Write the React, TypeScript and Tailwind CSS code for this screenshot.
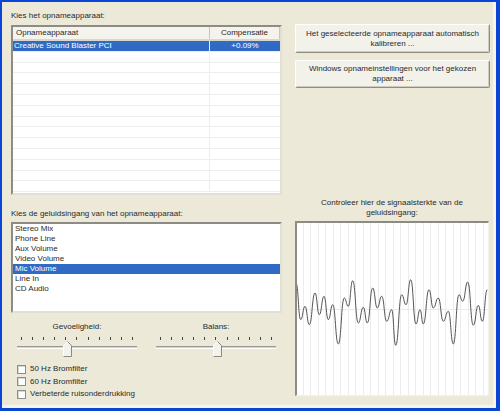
import React from 'react'

const font = { fontFamily: '"Liberation Sans", Arial, sans-serif' }

// peaks and troughs of the signal, traced from the graph (x, y inside the box)
const wave: [number, number][] = [
  [1, 62], [5.7, 98.7], [10, 85.3], [14.3, 103.7], [20, 72], [24.3, 93.7], [29, 75.3],
  [33.3, 98.7], [37.7, 83.7], [43.3, 123], [49.3, 77], [53.3, 85.3], [57.7, 59.7],
  [63.3, 102], [68.3, 86.3], [72.3, 102], [77.7, 67], [82.3, 87], [86.7, 75.3],
  [91.7, 100.3], [96.7, 88.7], [100.7, 124.3], [106.7, 73.7], [111, 83.7], [115.7, 58.7],
  [121, 103], [125, 88.7], [128.3, 103], [134, 68.7], [138.3, 87], [143.3, 77],
  [148.3, 100.3], [153.3, 90.3], [158.3, 123], [164, 73.7], [167.7, 80.3], [172.7, 61],
  [178.3, 104.3], [183.3, 84.3], [187.3, 100.3], [192.3, 68.7],
]

const wavePath = () => {
  let d = `M${wave[0][0]} ${wave[0][1]}`
  for (let i = 1; i < wave.length; i++) {
    const [x0, y0] = wave[i - 1]
    const [x1, y1] = wave[i]
    const h = (x1 - x0) / 2
    d += ` C${x0 + h} ${y0} ${x1 - h} ${y1} ${x1} ${y1}`
  }
  return d
}

const devices = [{ name: 'Creative Sound Blaster PCI', comp: '+0.09%' }]
const inputs = ['Stereo Mix', 'Phone Line', 'Aux Volume', 'Video Volume', 'Mic Volume', 'Line In', 'CD Audio']
const filters = ['50 Hz Bromfilter', '60 Hz Bromfilter', 'Verbeterde ruisonderdrukking']

const XpButton = ({ lines }: { lines: string[] }) => (
  <button className="w-[195px] flex flex-col items-center justify-center rounded-[2px] bg-[#f2f1ea] border border-t-white border-l-white border-r-[#8e8c83] border-b-[#8e8c83] shadow-[inset_-1px_-1px_0_#cfccbf] text-[8px] leading-[10px] text-[#2a2a2a]">
    {lines.map((l) => (
      <span key={l}>{l}</span>
    ))}
  </button>
)

const Slider = ({ label, thumb }: { label: string; thumb: number }) => (
  <div className="w-[120px] flex flex-col">
    <div className="h-[10px] text-center text-[8px] leading-[10px] text-[#2a2a2a]">{label}</div>
    <div className="mt-[5px] px-[4px] flex justify-between">
      {Array.from({ length: 11 }).map((_, i) => (
        <div key={i} className="w-px h-[3px] bg-[#444]" />
      ))}
    </div>
    <div className="relative h-[17px]">
      <div className="mt-[6px] h-[3px] border-t border-t-[#9a9890] border-b border-b-white bg-[#d8d5c8]" />
      <svg className="absolute top-[1px]" style={{ left: thumb }} width="9" height="16" viewBox="0 0 9 16">
        <path d="M0.5 15.5V4.5L4.5 0.5L8.5 4.5V15.5Z" fill="#f3f2ec" />
        <path d="M0.5 15.5V4.5L4.5 0.5" fill="none" stroke="#ffffff" />
        <path d="M4.5 0.5L8.5 4.5V15.5H0.5" fill="none" stroke="#8a887f" />
      </svg>
    </div>
  </div>
)

export default function App() {
  return (
    <div
      className="w-[500px] h-[411px] bg-[#0b45d6] pt-[2px] pl-[2px] pr-[4px] pb-[3px] overflow-hidden"
      style={font}
    >
      <div className="w-full h-full bg-[#ece9d8] border-r-[3px] border-b-[3px] border-[#f5f4ee] flex text-[#2a2a2a]">
        {/* left column */}
        <div className="ml-[9px] w-[271px] flex flex-col">
          <div className="mt-[9px] h-[10px] text-[8px] leading-[10px]">Kies het opnameapparaat:</div>

          <div className="mt-[4px] h-[170px] bg-white border-2 border-t-[#8c8b85] border-l-[#8c8b85] border-r-[#e2e0d6] border-b-[#e2e0d6] overflow-hidden">
            <div className="flex h-[14px] bg-[#f4f3ee] border-b-2 border-[#d9d6ca] text-[8px] leading-[12px]">
              <div className="w-[197px] pl-[3px] border-r border-[#c9c6ba]">Opnameapparaat</div>
              <div className="w-[70px] text-center border-r border-[#c9c6ba]">Compensatie</div>
            </div>
            {Array.from({ length: 14 }).map((_, i) => {
              const d = devices[i]
              return (
                <div
                  key={i}
                  className={`flex h-[10.8px] border-b border-[#eeeeee] text-[8px] leading-[10px] ${d ? 'bg-[#316ac5] text-white' : ''}`}
                >
                  <div className="w-[197px] pl-[1px] border-r border-[#eeeeee] whitespace-nowrap">{d?.name}</div>
                  <div className="w-[70px] text-center">{d?.comp}</div>
                </div>
              )
            })}
          </div>

          <div className="mt-[14px] h-[10px] text-[8px] leading-[10px]">Kies de geluidsingang van het opnameapparaat:</div>

          <div className="mt-[3px] h-[91px] bg-white border-2 border-t-[#8c8b85] border-l-[#8c8b85] border-r-[#e2e0d6] border-b-[#e2e0d6]">
            {inputs.map((name) => (
              <div
                key={name}
                className={`h-[10px] pl-[2px] text-[8px] leading-[10px] ${name === 'Mic Volume' ? 'bg-[#316ac5] text-white' : ''}`}
              >
                {name}
              </div>
            ))}
          </div>

          <div className="mt-[9px] ml-[6px] flex gap-[19px]">
            <Slider label="Gevoeligheid:" thumb={46} />
            <Slider label="Balans:" thumb={57} />
          </div>

          <div className="mt-[6px] ml-[6px] flex flex-col">
            {filters.map((f) => (
              <div key={f} className="h-[12.5px] flex items-center gap-[4px]">
                <div className="w-[9px] h-[9px] bg-white border border-[#8f8e88] shadow-[inset_1px_1px_0_#d8d7d0]" />
                <span className="text-[8px] leading-[10px]">{f}</span>
              </div>
            ))}
          </div>
        </div>

        {/* right column */}
        <div className="ml-[13px] w-[195px] flex flex-col">
          <div className="mt-[22px] h-[29px] flex">
            <XpButton lines={['Het geselecteerde opnameapparaat automatisch', 'kalibreren ...']} />
          </div>
          <div className="mt-[7px] h-[28px] flex">
            <XpButton lines={['Windows opnameinstellingen voor het gekozen', 'apparaat ...']} />
          </div>

          <div className="mt-[110px] w-[194px] text-center text-[8px] leading-[10px]">
            <div>Controleer hier de signaalsterkte van de</div>
            <div>geluidsingang:</div>
          </div>

          <div className="mt-[3px] w-[194px] h-[175px] bg-white border-t-2 border-l-2 border-[#8c8b85] border-r border-b border-r-[#f2f1ea] border-b-[#f2f1ea] overflow-hidden">
            <svg width="191" height="172" viewBox="2 2 191 172" shapeRendering="geometricPrecision">
              {Array.from({ length: 26 }).map((_, i) => (
                <line key={i} x1={Math.round(7.5 * (i + 1)) + 0.5} y1="0" x2={Math.round(7.5 * (i + 1)) + 0.5} y2="180" stroke="#ececec" strokeWidth="1" />
              ))}
              <line x1="0" y1="88.5" x2="200" y2="88.5" stroke="#ececec" strokeWidth="1" />
              <path d={wavePath()} fill="none" stroke="#555555" strokeWidth="1" />
            </svg>
          </div>
        </div>
      </div>
    </div>
  )
}
